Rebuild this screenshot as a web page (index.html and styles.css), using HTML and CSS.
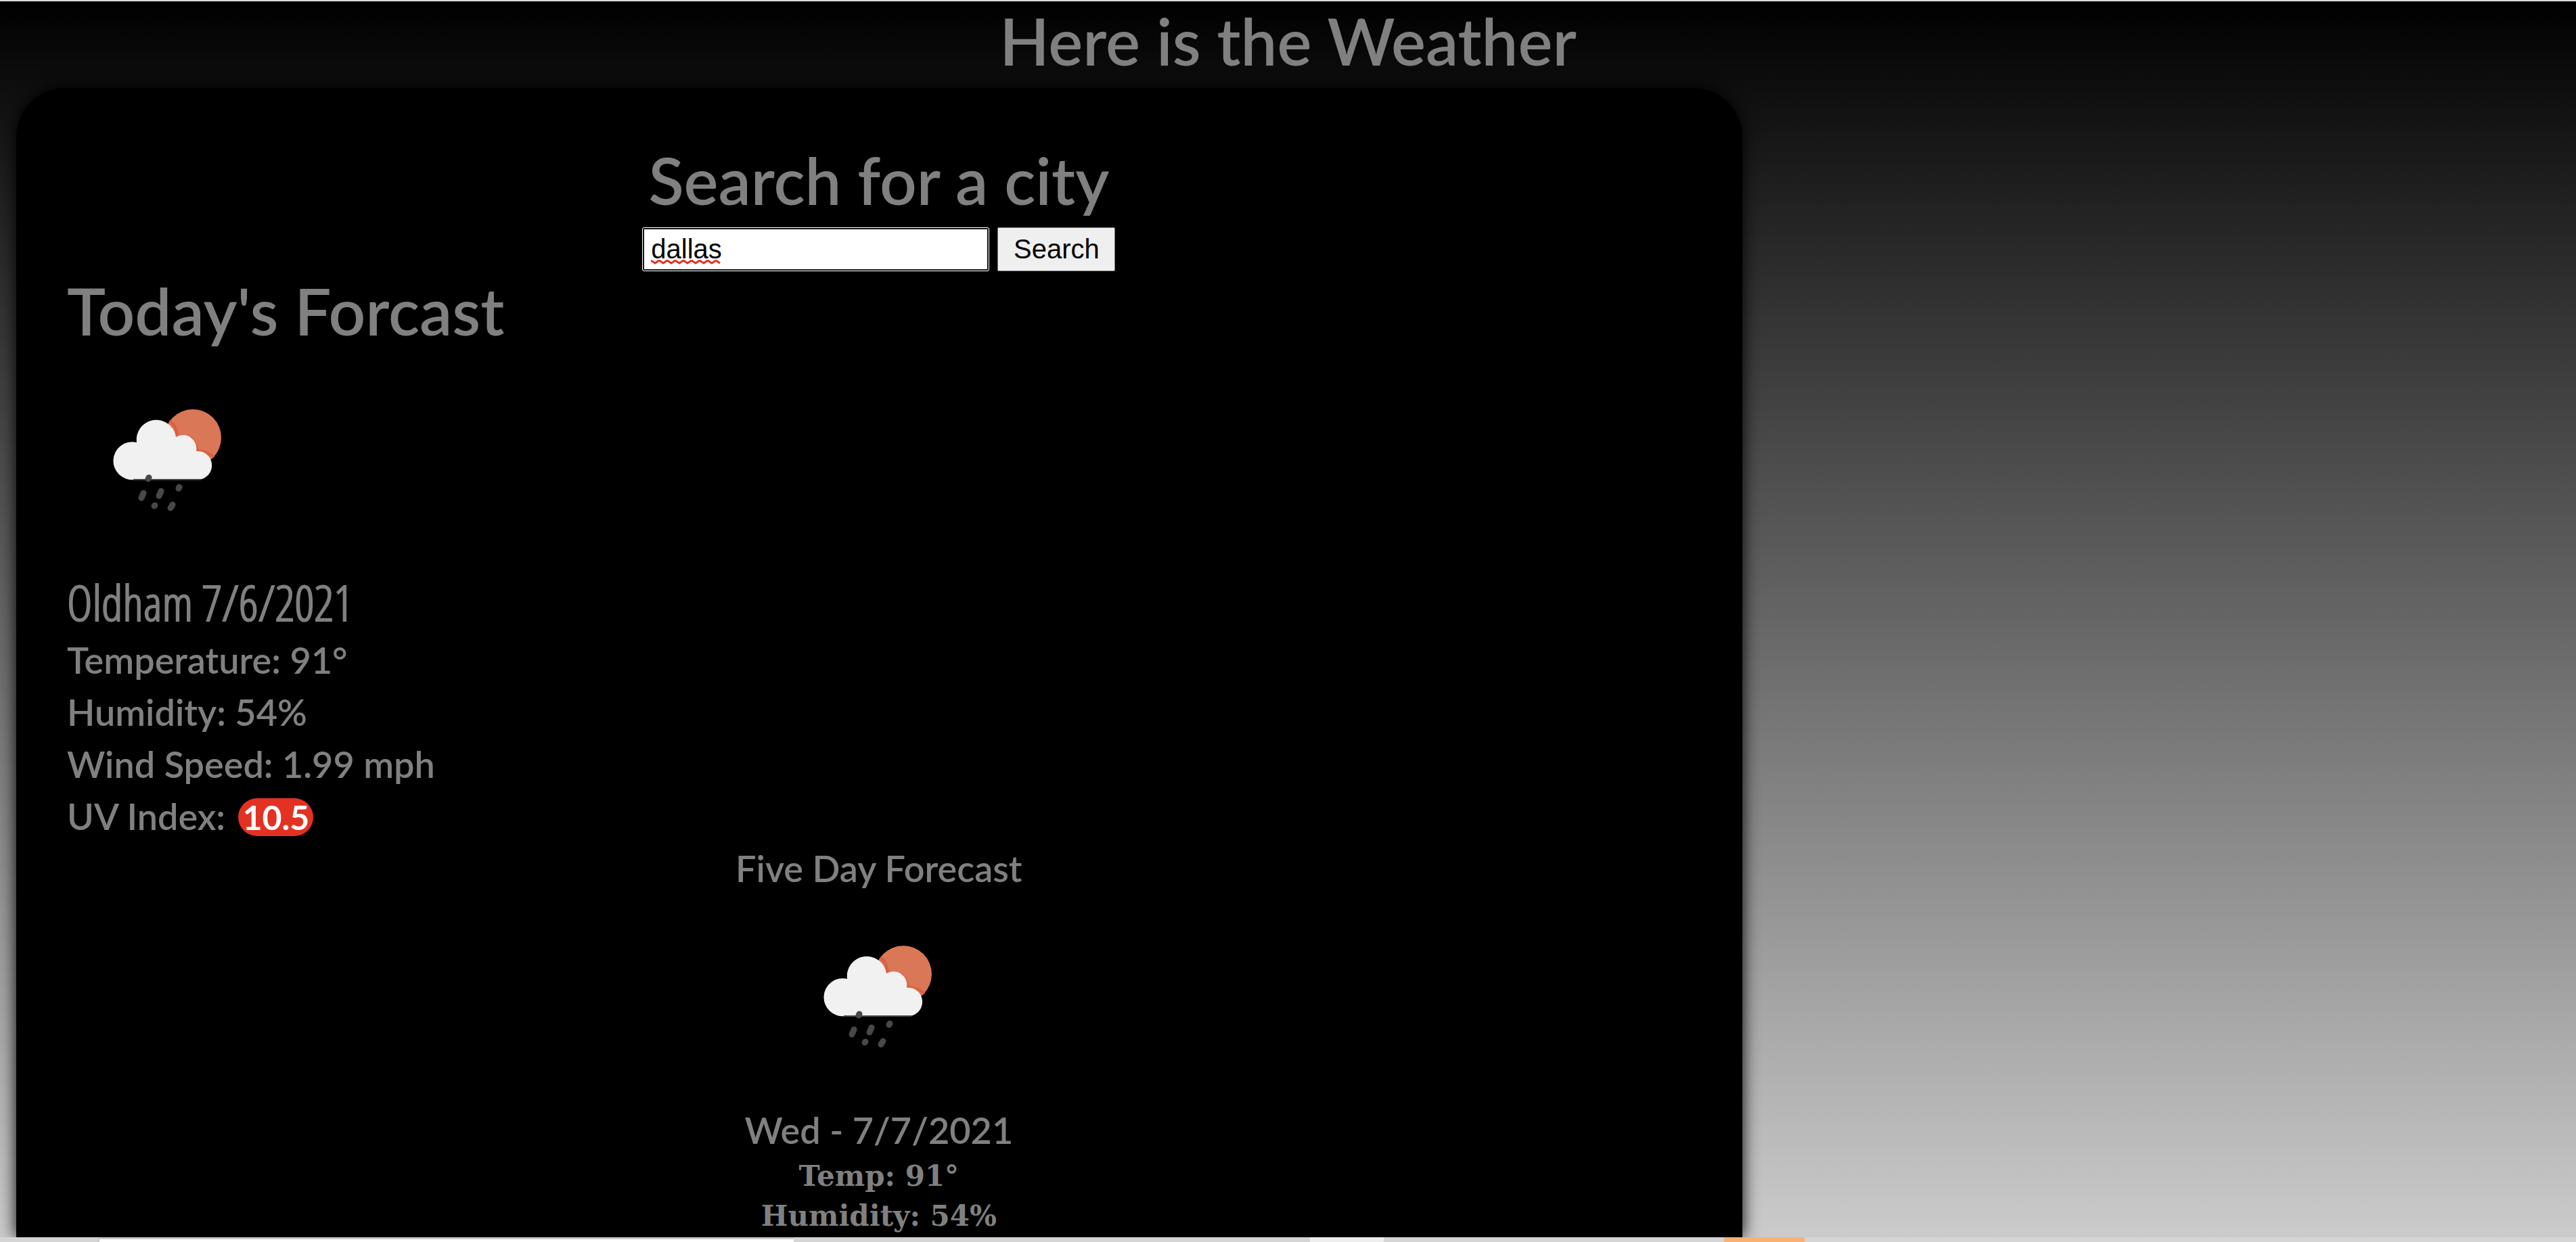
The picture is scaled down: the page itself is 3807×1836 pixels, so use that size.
FILE: index.html
```html
<!DOCTYPE html>
<html lang="en">
<head>
<meta charset="utf-8">
<title>Weather</title>
<link rel="stylesheet" href="styles.css">
</head>
<body>
<svg class="defs" aria-hidden="true">
  <symbol id="rain" viewBox="0 0 300 300">
    <circle cx="186" cy="118" r="42" fill="#d97757"/>
    <path d="M152 93A31 31 0 0 1 163 117Q187 110 193 138Q208 137 217 147" fill="none" stroke="#dc5f3f" stroke-width="4"/>
    <path d="M100 180A28 28 0 1 1 103 125A29 29 0 1 1 161 117A20 20 0 0 1 191 138A21 21 0 1 1 195 180Z" fill="#f1f1f1"/>
    <path d="M98 180H198" stroke="#48484a" stroke-width="2"/>
    <g fill="none" stroke="#48484a" stroke-width="9" stroke-linecap="round">
      <path d="M121 177L120 179M113 200L110 207M139 197L136 204M166 191L165 193M130 218L129 219M156 217L153 222"/>
    </g>
  </symbol>
</svg>
<header class="top"><h1 class="title">Here is the Weather</h1></header>
<main class="panel">
  <form class="search">
    <label class="title search-title" for="city">Search for a city</label>
    <div class="controls">
      <span class="field">
        <input class="city" id="city" type="text" value="dallas">
        <svg class="squiggle" viewBox="0 0 104 7" aria-hidden="true"><path d="M0 1l6 4 6-4 6 4 6-4 6 4 6-4 6 4 6-4 6 4 6-4 6 4 6-4 6 4 6-4 6 4 6-4 6 4" fill="none" stroke="#e33122" stroke-width="3"/></svg>
      </span>
      <button class="go" type="button">Search</button>
    </div>
  </form>
  <section class="today">
    <h2 class="title">Today's Forcast</h2>
    <svg class="icon" role="img" aria-label="Rain"><use href="#rain"/></svg>
    <h3 class="place">Oldham 7/6/2021</h3>
    <p class="line">Temperature: 91°</p>
    <p class="line">Humidity: 54%</p>
    <p class="line">Wind Speed: 1.99 mph</p>
    <p class="line">UV Index: <span class="uv">10.5</span></p>
  </section>
  <section class="five">
    <h2 class="line">Five Day Forecast</h2>
    <svg class="icon" role="img" aria-label="Rain"><use href="#rain"/></svg>
    <h3 class="line">Wed - 7/7/2021</h3>
    <p class="detail">Temp: 91°</p>
    <p class="detail">Humidity: 54%</p>
  </section>
</main>
<footer class="strip">
  <span class="tab"></span>
  <span class="chip"></span>
  <span class="accent"></span>
</footer>
</body>
</html>
```
FILE: styles.css
```css
* { box-sizing: border-box; }
body {
  display: flex;
  flex-direction: column;
  margin: 0;
  height: 100vh;
  overflow: hidden;
  border-top: 2px solid #dcdce2;
  background: linear-gradient(#000, #ccc);
  color: #808080;
  font-family: Lato, "Open Sans", sans-serif;
}
h1, h2, h3, p { margin: 0; }
.defs { position: absolute; width: 0; height: 0; }
.top { flex: none; height: 128px; text-align: center; }
.title { display: block; font-size: 96px; font-weight: 600; line-height: 116px; }
.search-title { line-height: 120px; }
.panel {
  flex: 1;
  min-height: 0;
  overflow: hidden;
  width: 67%;
  margin-left: 24px;
  padding: 76px 76px 0 75px;
  border-radius: 72px 72px 0 0;
  background: #000;
  box-shadow: 0 0 24px #000;
}
.search, .five { text-align: center; }
.controls {
  display: flex;
  justify-content: center;
  gap: 12px;
  height: 75px;
  padding-top: 10px;
}
.field { position: relative; display: flex; }
.city, .go { height: 65px; font: 40px "Liberation Sans", Arial, sans-serif; }
.city { width: 513px; padding: 0 10px; border: 3px solid #111; outline: 1px solid #fff; outline-offset: -1px; border-radius: 3px; }
.go { width: 174px; padding: 0; border: 1px solid #777; border-radius: 2px; background: #efefef; color: #000; }
.squiggle { position: absolute; left: 13px; bottom: 10px; width: 104px; height: 7px; }
.icon { display: block; width: 300px; height: 300px; }
.today .icon { margin-top: 12px; }
.place {
  margin-top: 14px;
  font: 300 72px/94px "Open Sans Condensed Light", "Open Sans Light Condensed", "OpenSansCondensed-Light", "Roboto Condensed", "Open Sans Condensed", sans-serif;
  -webkit-text-stroke: 2px #808080;
}
.line { font-size: 54px; font-weight: 600; line-height: 77px; }
.uv { display: inline-block; margin-left: 6px; padding: 0 6px; border-radius: 28px; background: #e33122; color: #fff; font-size: 50px; font-weight: 700; line-height: 56px; }
.five .icon { margin: 0 auto 10px; }
.detail { font: 700 42px/59px "DejaVu Serif", serif; }
.strip {
  flex: none;
  display: grid;
  grid-template-columns: 144fr 1029fr 763fr 109fr 503fr 119fr 1140fr;
  height: 7px;
  background: #d5d5d5;
}
.tab { grid-column: 2; border: solid #ccc; border-width: 3px 0 0 3px; background: #fff; }
.chip { grid-column: 4; background: #eee; }
.accent { grid-column: 6; background: #f8b076; }
```
